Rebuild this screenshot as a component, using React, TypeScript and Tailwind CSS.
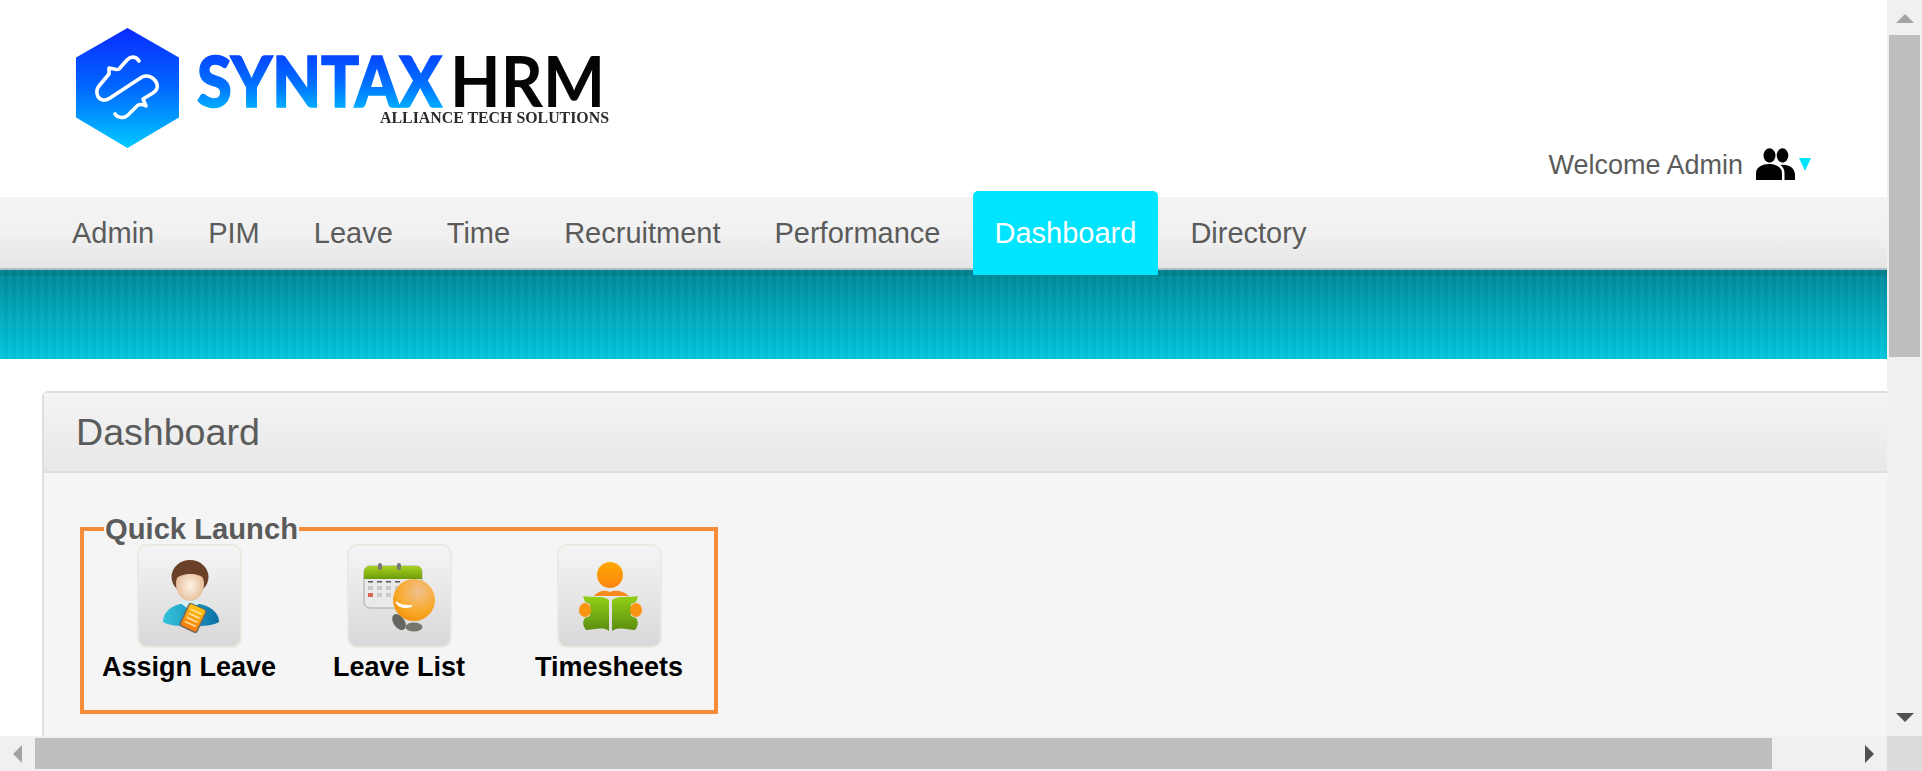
const tabs = ["Admin", "PIM", "Leave", "Time", "Recruitment", "Performance", "Dashboard", "Directory"];

function Logo() {
  return (
    <svg width="540" height="122" viewBox="0 0 540 122" className="blur-[0.4px]">
      <defs>
        <linearGradient id="hexFill" x1="0" y1="0" x2="0" y2="1">
          <stop offset="0" stopColor="#0a2bff" />
          <stop offset="0.5" stopColor="#0068ff" />
          <stop offset="1" stopColor="#00c8ff" />
        </linearGradient>
        <linearGradient id="nameFill" x1="0" y1="0" x2="0" y2="1">
          <stop offset="0" stopColor="#0a2bff" />
          <stop offset="0.55" stopColor="#0070ff" />
          <stop offset="1" stopColor="#00d0ff" />
        </linearGradient>
      </defs>
      {/* hexagon, origin is 76,28 */}
      <path d="M51.5 1 L102 30 V89 L51.5 119 L1 89 V30 Z" fill="url(#hexFill)" stroke="url(#hexFill)" strokeWidth="2" strokeLinejoin="round" />
      <path
        d="M63 33 C60 28 55 28 51 32 L43 41 C41 43 36 40 33 40 L33 46 L23 58 C19 63 21 71 27 72 C30 72.5 32 71.5 34 70 L66 49 C72 46 79 50 81 56 C82 60 80 63 77 65 L67 71 L70 78 C66 76 63 76 61 78 L52 87 C48 91 42 90 39 86"
        fill="none"
        stroke="#ffffff"
        strokeWidth="3.6"
        strokeLinecap="round"
        strokeLinejoin="round"
      />
      <text x="121" y="79" fontFamily="Lato, sans-serif" fontWeight="900" fontSize="70" textLength="245" lengthAdjust="spacingAndGlyphs" fill="url(#nameFill)" stroke="url(#nameFill)" strokeWidth="1.5">SYNTAX</text>
      <text x="374" y="79" fontFamily="Lato, sans-serif" fontWeight="700" fontSize="70" textLength="155" lengthAdjust="spacingAndGlyphs" fill="#050505">HRM</text>
      <text x="304" y="95" fontFamily="'Liberation Serif', serif" fontWeight="700" fontSize="16.5" textLength="229" lengthAdjust="spacingAndGlyphs" fill="#2b2b2b">ALLIANCE TECH SOLUTIONS</text>
    </svg>
  );
}

function UsersIcon() {
  return (
    <svg width="39" height="32" viewBox="0 0 39 32" fill="#000000" className="blur-[0.3px]">
      <ellipse cx="13.5" cy="7.5" rx="6" ry="7.2" />
      <ellipse cx="26.5" cy="7.5" rx="5.8" ry="7.2" />
      <path d="M0 32 V25 C0 19 7 16 13 16 C19 16 26 19 26 25 V32 Z" />
      <path d="M28.5 32 V25 C28.5 21.5 27 19 24.5 17 C31 15.5 39 19 39 27 V32 Z" />
    </svg>
  );
}

function AssignLeaveIcon() {
  return (
    <svg width="100" height="100" viewBox="0 0 100 100">
      <defs>
        <linearGradient id="shirt" x1="0" y1="0" x2="1" y2="0">
          <stop offset="0" stopColor="#35c4dc" />
          <stop offset="1" stopColor="#0b6fa6" />
        </linearGradient>
        <radialGradient id="skin" cx="0.5" cy="0.55" r="0.6">
          <stop offset="0" stopColor="#fff3e6" />
          <stop offset="1" stopColor="#e0b48c" />
        </radialGradient>
        <linearGradient id="sheet" x1="0" y1="0" x2="0" y2="1">
          <stop offset="0" stopColor="#ffc410" />
          <stop offset="1" stopColor="#f87a10" />
        </linearGradient>
      </defs>
      <path d="M24 76 C24 64 36 57 51 57 C66 57 80 64 80 76 C72 82 32 82 24 76 Z" fill="url(#shirt)" />
      <path d="M41 57 L51 64 L61 57 L56 52 H46 Z" fill="#d7eef3" />
      <ellipse cx="51" cy="31" rx="18.5" ry="17" fill="#6b4028" />
      <ellipse cx="51" cy="38" rx="14" ry="17" fill="url(#skin)" />
      <path d="M37 33 C42 27 60 26 65 33 L66 22 L50 16 L36 22 Z" fill="#6b4028" />
      <g transform="rotate(25 54 72)">
        <rect x="44" y="59" width="20" height="26" rx="3" fill="#6f6a5e" />
        <rect x="45.5" y="60" width="17" height="23.5" rx="2" fill="url(#sheet)" />
        <g stroke="#ffe6a8" strokeWidth="1.5">
          <path d="M48 65 H60" />
          <path d="M48 69.5 H60" />
          <path d="M48 74 H60" />
          <path d="M48 78.5 H60" />
        </g>
      </g>
    </svg>
  );
}

function LeaveListIcon() {
  return (
    <svg width="100" height="100" viewBox="0 0 100 100">
      <defs>
        <linearGradient id="calTop" x1="0" y1="0" x2="0" y2="1">
          <stop offset="0" stopColor="#a8d020" />
          <stop offset="1" stopColor="#6d9c08" />
        </linearGradient>
        <radialGradient id="ball" cx="0.6" cy="0.3" r="0.8">
          <stop offset="0" stopColor="#f0c090" />
          <stop offset="0.6" stopColor="#f9aa2c" />
          <stop offset="1" stopColor="#f08c00" />
        </radialGradient>
      </defs>
      <g transform="translate(2 0)">
        <rect x="13" y="20" width="58" height="42" rx="6" fill="#e9e9e9" stroke="#a8a8a8" strokeWidth="1" />
        <path d="M13 33 V26 C13 22 16 20 19 20 H65 C69 20 71 22 71 26 V33 Z" fill="url(#calTop)" />
        <rect x="27" y="17" width="4" height="7" rx="2" fill="#777777" />
        <rect x="46" y="17" width="4" height="7" rx="2" fill="#777777" />
        <g fill="#555555">
          <rect x="17" y="35" width="5" height="1.5" />
          <rect x="26" y="35" width="5" height="1.5" />
          <rect x="35" y="35" width="5" height="1.5" />
          <rect x="44" y="35" width="5" height="1.5" />
        </g>
        <g fill="#c9c9c9">
          <rect x="26" y="40" width="5" height="4" />
          <rect x="35" y="40" width="5" height="4" />
          <rect x="44" y="40" width="5" height="4" />
          <rect x="26" y="47" width="5" height="4" />
          <rect x="35" y="47" width="5" height="4" />
          <rect x="17" y="40" width="5" height="4" />
        </g>
        <rect x="17" y="47" width="5" height="4" fill="#d66a5a" />
      </g>
      <ellipse cx="50" cy="76" rx="5.5" ry="9" transform="rotate(-35 50 76)" fill="#666660" />
      <ellipse cx="65" cy="81" rx="8.5" ry="4.5" fill="#77776f" />
      <circle cx="65" cy="54" r="21" fill="url(#ball)" />
      <path d="M47 56 C51 62 57 62 63 60 C57 60 51 59 47 56 Z" fill="#ffffff" stroke="#ffffff" strokeWidth="1.5" />
    </svg>
  );
}

function TimesheetsIcon() {
  return (
    <svg width="100" height="100" viewBox="0 0 100 100">
      <defs>
        <linearGradient id="head" x1="0" y1="0" x2="0" y2="1">
          <stop offset="0" stopColor="#ffa800" />
          <stop offset="1" stopColor="#fb8510" />
        </linearGradient>
        <linearGradient id="book" x1="0" y1="0" x2="0" y2="1">
          <stop offset="0" stopColor="#94d018" />
          <stop offset="1" stopColor="#5b8c10" />
        </linearGradient>
      </defs>
      <circle cx="51" cy="29" r="13" fill="url(#head)" />
      <path d="M35 50 C40 44 46 44 51 46 C56 44 63 44 70 50 Z" fill="#f98a20" />
      <path d="M24 50 C33 52 44 49 50 54 V85 C44 80 34 84 27 84 C24 80 23 76 26 72 L31 70 V58 L26 56 Z" fill="url(#book)" />
      <path d="M79 50 C70 52 60 49 53 54 V85 C60 80 70 84 76 84 C79 80 80 76 77 72 L72 70 V58 L77 56 Z" fill="url(#book)" />
      <ellipse cx="26" cy="64" rx="6" ry="7" fill="#fb9410" />
      <ellipse cx="77" cy="64" rx="6" ry="7" fill="#fb9410" />
    </svg>
  );
}

function Launch({ label, children }: { label: string; children: React.ReactNode }) {
  return (
    <div className="flex flex-col items-center">
      <div className="flex h-[104px] w-[105px] items-center justify-center rounded-[10px] border-2 border-[#eaeae2] bg-gradient-to-b from-[#f5f5f5] to-[#d8d8d8]">
        {children}
      </div>
      <div className="mt-[2px] text-[27px] leading-[34px] font-bold whitespace-nowrap text-black">{label}</div>
    </div>
  );
}

export default function App() {
  return (
    <div className="flex h-screen flex-col overflow-hidden bg-white font-['Liberation_Sans',Arial,sans-serif]">
      <div className="flex min-h-0 flex-1">
        <div className="min-w-0 flex-1 overflow-hidden">
          {/* Header */}
          <div className="flex h-[197px] justify-between pr-[76px]">
            <div className="pt-[28px] pl-[76px]">
              <Logo />
            </div>
            <div className="flex items-start gap-[4px] pt-[148px]">
              <span className="mr-[9px] text-[27px] leading-[34px] text-[#5b5b5b]">Welcome Admin</span>
              <UsersIcon />
              <div className="mt-[10px] h-0 w-0 border-x-[6px] border-t-[13px] border-x-transparent border-t-[#00e5ff]" />
            </div>
          </div>

          {/* Menu */}
          <div className="flex h-[71px] items-start bg-gradient-to-b from-[#f3f3f3] via-[#f1f1f1] to-[#e5e5e5] pl-[50px]">
            {tabs.map((t) => (
              <div
                key={t}
                className={
                  t === "Dashboard"
                    ? "relative z-10 mr-[10px] -mt-[6px] h-[84px] rounded-t-[5px] bg-[#00e5ff] px-[22px] pt-[22px] text-[29px] leading-[40px] text-white"
                    : "mr-[10px] h-[71px] px-[22px] pt-[16px] text-[29px] leading-[40px] text-[#5b5b5b]"
                }
              >
                {t}
              </div>
            ))}
          </div>
          <div className="h-[91px] border-t-2 border-[#a9c0c4] bg-[repeating-linear-gradient(90deg,rgba(255,255,255,0.03)_0px,rgba(255,255,255,0.03)_4px,rgba(0,0,0,0.02)_4px,rgba(0,0,0,0.02)_8px),linear-gradient(to_bottom,#007f8e_0px,#007f8e_5px,#008c9d_6px,#00c6dc_100%)]" />

          {/* Panel */}
          <div className="mt-[32px] -mr-[30px] ml-[42px] min-h-[400px] rounded-t-[6px] border-2 border-[#dedede] bg-[#f5f5f5]">
            <div className="flex h-[80px] items-center border-b-2 border-[#dedede] bg-gradient-to-b from-[#f4f4f4] to-[#e8e8e8] pl-[32px] text-[37.6px] text-[#5b5b5b]">
              Dashboard
            </div>
            <fieldset className="mt-[41px] ml-[36px] h-[200px] w-[638px] border-4 border-[#f78c38]">
              <legend className="ml-[20px] px-[1px] text-[29.2px] leading-[30px] font-bold text-[#5b5b5b]">Quick Launch</legend>
              <div className="grid w-[630px] grid-cols-3">
                <Launch label="Assign Leave"><AssignLeaveIcon /></Launch>
                <Launch label="Leave List"><LeaveListIcon /></Launch>
                <Launch label="Timesheets"><TimesheetsIcon /></Launch>
              </div>
            </fieldset>
          </div>
        </div>

        {/* Vertical scrollbar */}
        <div className="flex w-[35px] flex-col items-center bg-[#f0f0f0]">
          <div className="mt-[14px] h-0 w-0 border-x-[9px] border-b-[9px] border-x-transparent border-b-[#a3a3a3]" />
          <div className="mt-[12px] h-[322px] w-[31px] bg-[#bebebe]" />
          <div className="mt-[356px] h-0 w-0 border-x-[9px] border-t-[9px] border-x-transparent border-t-[#505050]" />
        </div>
      </div>

      {/* Horizontal scrollbar */}
      <div className="flex h-[35px] items-center bg-[#f0f0f0]">
        <div className="ml-[13px] h-0 w-0 border-y-[9px] border-r-[9px] border-y-transparent border-r-[#a3a3a3]" />
        <div className="ml-[13px] h-[31px] w-[1737px] bg-[#bebebe]" />
        <div className="ml-[93px] h-0 w-0 border-y-[9px] border-l-[9px] border-y-transparent border-l-[#505050]" />
        <div className="ml-auto h-[35px] w-[35px] bg-[#dcdcdc]" />
      </div>
    </div>
  );
}
